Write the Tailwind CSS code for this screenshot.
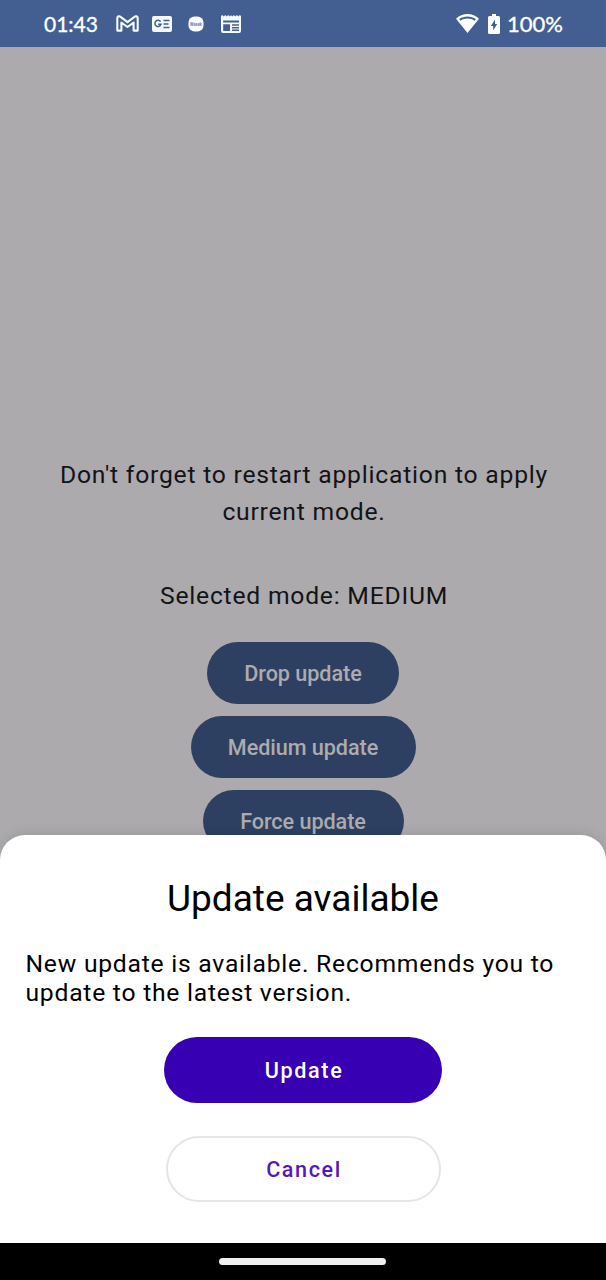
<!DOCTYPE html>
<html lang="en">
<head>
<meta charset="utf-8">
<title>Update available</title>
<script src="https://cdn.jsdelivr.net/npm/@tailwindcss/browser@4"></script>
</head>
<body class="font-[Roboto,sans-serif]">
<div class="relative flex h-[1280px] w-[606px] flex-col overflow-hidden bg-[#acaaad]">
  <header class="flex h-[46.500px] shrink-0 items-center bg-[#435e91] pl-[43px] pr-[43px] pt-px text-white">
    <svg class="mr-[13px] block h-[46px] w-[60px] overflow-visible font-[Lato,sans-serif]" viewBox="0 0 60 46"><text x="1" y="31" textLength="54" lengthAdjust="spacingAndGlyphs" fill="#fff" stroke="#fff" stroke-width=".35" font-size="22">01:43</text></svg>
    <svg class="mr-[13px] h-[17px] w-[23px]" viewBox="0 0 23 17" fill="none" stroke="#f3fbff" stroke-width="2.1" stroke-linejoin="round"><path d="M1.300 15.600V3.100C1.300 1.200 3.300.8 4.600 1.900L11.500 7.200 18.400 1.900C19.700.8 21.700 1.200 21.700 3.100V15.600H17.600V7.600L11.500 12 5.400 7.600V15.600Z"/></svg>
    <svg class="mr-[16px] h-[16px] w-[20px]" viewBox="0 0 20 16"><rect width="20" height="16" rx="2" fill="#f3fbff"/><path d="M8.600 5.600A3.100 3.100 0 1 0 9 8.300H6.200M11.500 4.500h6M11.500 8h5M11.500 11.500h6" fill="none" stroke="#435e91" stroke-width="1.500"/></svg>
    <svg class="mr-[16.500px] h-[16px] w-[16px]" viewBox="0 0 16 16"><rect x=".5" y=".5" width="15" height="15" rx="6" fill="#f8fcff"/><text x="2" y="9.700" textLength="12" lengthAdjust="spacingAndGlyphs" font-size="5" font-weight="700" fill="#7580a0">Weeek</text></svg>
    <svg class="h-[18px] w-[20px]" viewBox="0 0 20 18"><path fill="#f3fbff" fill-rule="evenodd" d="M0 1 1.300 0 2.800 1.500 4.300 0 5.800 1.500 7.300 0 8.800 1.500 10 .3 11.400 1.500 12.900 0 14.400 1.500 15.900 0 17.400 1.500 18.800 0 20 1V16Q20 18 18 18H2Q0 18 0 16ZM2.200 5.500V7.500H18V5.500ZM2.200 9.200V16H9V9.200ZM11 9.200V10.800H18V9.200ZM11 12V13.400H18V12ZM11 14.600V16H18V14.600Z"/></svg>
    <svg class="ml-auto mr-[9px] h-[19px] w-[23px]" viewBox="0 0 24 19" preserveAspectRatio="none"><path fill="#fff" d="M12 0C7.300 0 3.200 1.800 0 4.700L12 19 24 4.700C20.800 1.800 16.700 0 12 0ZM12 2.400C15.300 2.400 18.300 3.400 20.700 5L19.300 6.800C17.200 5.300 14.700 4.600 12 4.600 9.300 4.600 6.800 5.300 4.700 6.800L3.300 5C5.700 3.400 8.700 2.400 12 2.400Z"/></svg>
    <svg class="mr-[7px] h-[20px] w-[12px]" viewBox="0 0 12 20"><path fill="#fff" d="M4 0H8V2H10.500Q12 2 12 3.500V18.500Q12 20 10.500 20H1.500Q0 20 0 18.500V3.500Q0 2 1.500 2H4Z"/><path fill="#435e91" d="M7 5.500 2.800 12H5.200V16.500L9.200 10H7Z"/></svg>
    <svg class="block h-[46px] w-[56px] overflow-visible font-[Lato,sans-serif]" viewBox="0 0 56 46"><text x="0" y="31" textLength="56" lengthAdjust="spacingAndGlyphs" fill="#fff" stroke="#fff" stroke-width=".35" font-size="22">100%</text></svg>
  </header>

  <main class="flex flex-col items-center pt-[409.500px] text-[24.700px] leading-[37px] tracking-[0.77px] text-[#131316]">
    <p class="w-[557px] pl-[2px] text-center">Don't forget to restart application to apply<br>current mode.</p>
    <p class="mt-[47px] pl-[2px]">Selected mode: MEDIUM</p>
    <div class="mt-[28px] flex flex-col items-center gap-[12.500px] text-[21.600px] font-medium tracking-[-0.05px] text-[#adabae]">
      <button class="h-[61.500px] w-[192px] rounded-full bg-[#2d4061] pt-[2px]">Drop update</button>
      <button class="h-[61.500px] w-[225px] rounded-full bg-[#2d4061] pt-[2px]">Medium update</button>
      <button class="h-[61.500px] w-[201px] rounded-full bg-[#2d4061] pt-[2px]">Force update</button>
    </div>
  </main>

  <section class="absolute inset-x-0 bottom-0 flex h-[445px] flex-col items-center rounded-t-[25px] bg-white text-black shadow-[0_0_14px_rgba(0,0,0,0.12)]">
    <h1 class="mt-[42px] text-[37px] leading-[44px]">Update available</h1>
    <p class="mt-[28px] w-full pl-[25.500px] text-[24.700px] leading-[29px] tracking-[0.75px]">New update is available. Recommends you to<br>update to the latest version.</p>
    <button class="mt-[30px] h-[66px] w-[278px] shrink-0 rounded-full bg-[#3700b3] pl-[2px] pt-[2px] text-[21.600px] font-medium tracking-[1.650px] text-white">Update</button>
    <button class="mt-[33px] h-[66px] w-[275px] shrink-0 rounded-full border-2 border-[#e5e5e5] pl-[2px] pt-[2px] text-[21.600px] font-medium tracking-[1.600px] text-[#5517c4]">Cancel</button>
    <nav class="mt-auto flex h-[37px] w-full shrink-0 items-center justify-center bg-black">
      <span class="mr-px h-[7px] w-[167px] rounded-full bg-[#f1eeef]"></span>
    </nav>
  </section>
</div>
</body>
</html>
